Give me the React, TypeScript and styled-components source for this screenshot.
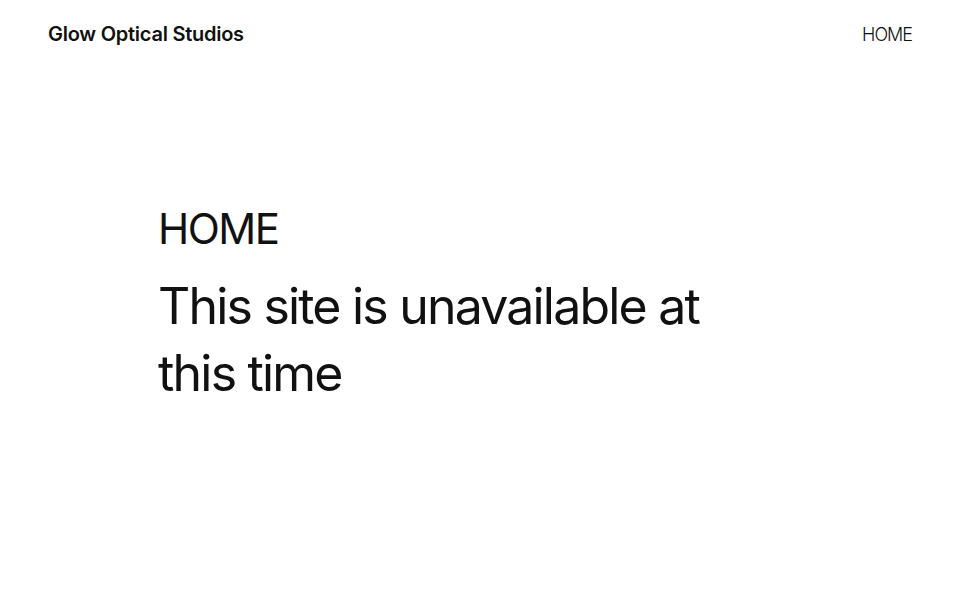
import styled, { createGlobalStyle } from "styled-components";

const GlobalStyle = createGlobalStyle`
    html, body {
        margin: 0;
        padding: 0;
        background: #ffffff;
    }
    body {
        font-family: Inter, "Noto Sans", sans-serif;
        color: #111111;
    }
`;

const Page = styled.div`
    width: 100%;
    min-height: 600px;
    display: flex;
    flex-direction: column;
`;

const Header = styled.header`
    display: flex;
    justify-content: space-between;
    align-items: center;
    height: 68px;
    padding: 0 48px;
`;

const Logo = styled.a`
    font-size: 20px;
    font-weight: 600;
    letter-spacing: -0.25px;
    color: #111111;
    text-decoration: none;
`;

const Nav = styled.nav`
    display: flex;
    gap: 24px;
`;

const NavLink = styled.a`
    font-size: 18px;
    font-weight: 300;
    letter-spacing: -1px;
    color: #111111;
    text-decoration: none;
`;

const Main = styled.main`
    padding: 133px 158px 0;
`;

const Title = styled.h1`
    margin: 0;
    font-size: 42px;
    font-weight: 400;
    line-height: 56px;
    letter-spacing: -1.5px;
`;

const Message = styled.p`
    margin: 16px 0 0;
    max-width: 600px;
    font-size: 50px;
    font-weight: 400;
    line-height: 67px;
    letter-spacing: -1.8px;
`;

const App = () => {
    return (
        <Page>
            <GlobalStyle />
            <Header>
                <Logo href="#">Glow Optical Studios</Logo>
                <Nav>
                    <NavLink href="#">HOME</NavLink>
                </Nav>
            </Header>
            <Main>
                <Title>HOME</Title>
                <Message>This site is unavailable at this time</Message>
            </Main>
        </Page>
    );
};

export default App;
